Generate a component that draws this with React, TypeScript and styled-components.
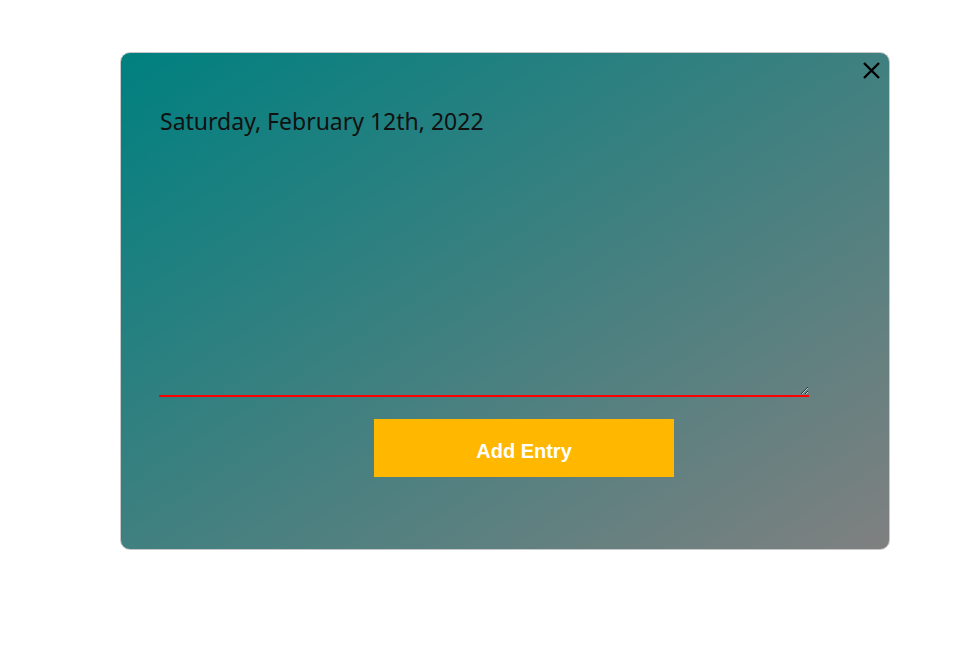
import React from 'react'
import styled, { createGlobalStyle } from 'styled-components'

const GlobalStyle = createGlobalStyle`
    html, body {
        margin: 0;
        padding: 0;
        background: #fff;
    }
    body {
        font-family: 'Noto Sans', 'Open Sans', sans-serif;
    }
`

const Page = styled.div`
    width: 980px;
    height: 672px;
    padding: 52px 0 0 120px;
    box-sizing: border-box;
`

const Modal = styled.div`
    position: relative;
    width: 770px;
    height: 498px;
    box-sizing: border-box;
    border: 1px solid #c8c8c8;
    border-radius: 10px;
    background: linear-gradient(to bottom right, #008080, #808080);
    padding: 52px 0 0 38px;
    display: flex;
    flex-direction: column;
`

const CloseButton = styled.button`
    position: absolute;
    top: 6px;
    right: 7px;
    width: 22px;
    height: 22px;
    padding: 0;
    border: none;
    background: none;
    cursor: pointer;
    display: flex;
    align-items: center;
    justify-content: center;
`

const DateTitle = styled.h2`
    margin: 0 0 0 1px;
    font-family: 'Noto Sans', sans-serif;
    font-size: 23px;
    font-weight: 400;
    line-height: 32px;
    color: #111;
`

const EntryInput = styled.textarea`
    width: 650px;
    height: 246px;
    margin-top: 14px;
    box-sizing: border-box;
    background: transparent;
    border: none;
    border-bottom: 2px solid #ff0000;
    outline: none;
    resize: vertical;
    font-family: 'Noto Sans', sans-serif;
    font-size: 18px;
    color: #111;
`

const AddButton = styled.button`
    margin: 22px 0 0 215px;
    width: 300px;
    height: 58px;
    padding: 6px 0 0;
    border: none;
    background: #ffb700;
    color: #fff;
    font-family: 'Liberation Sans', Arial, sans-serif;
    font-weight: 700;
    font-size: 20px;
    cursor: pointer;
`

export default function App() {
    return (
        <Page>
            <GlobalStyle />
            <Modal>
                <CloseButton aria-label="Close">
                    <svg width="19" height="19" viewBox="0 0 19 19">
                        <path d="M2 2 L17 17 M17 2 L2 17" stroke="#000" strokeWidth="2.4" strokeLinecap="butt" />
                    </svg>
                </CloseButton>
                <DateTitle>Saturday, February 12th, 2022</DateTitle>
                <EntryInput />
                <AddButton>Add Entry</AddButton>
            </Modal>
        </Page>
    )
}
